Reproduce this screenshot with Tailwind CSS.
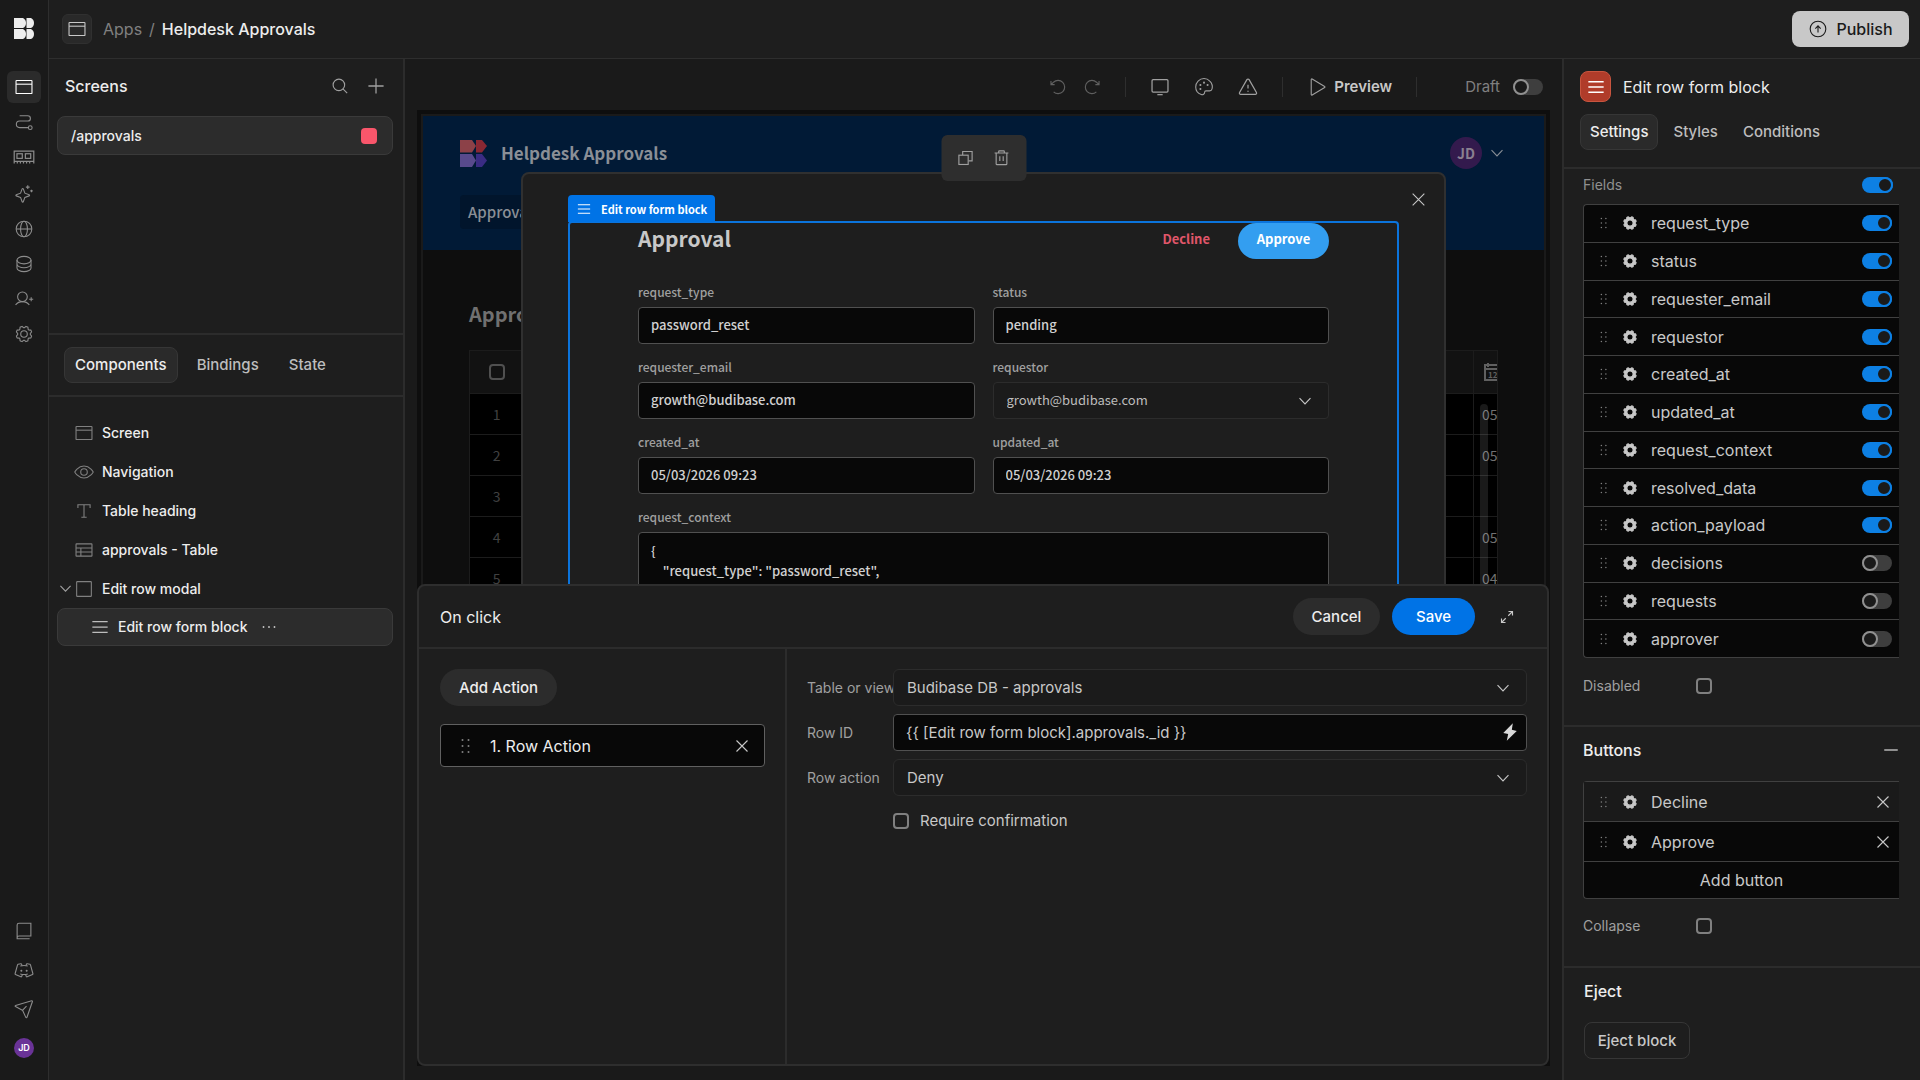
<!DOCTYPE html>
<html lang="en">
<head>
  <meta charset="UTF-8">
  <meta name="viewport" content="width=device-width, initial-scale=1.0">
  <title>Helpdesk Approvals | Budibase</title>
  <script src="https://cdn.jsdelivr.net/npm/@tailwindcss/browser@4"></script>
</head>
<body class="h-screen flex overflow-hidden bg-[#1e1e1e] text-[#ededed] font-['Inter',sans-serif] text-[15px] leading-5">
  <!-- Icon set -->
  <svg class="hidden" xmlns="http://www.w3.org/2000/svg">
    <defs>
      <symbol id="i-browser" viewBox="0 0 256 256"><rect x="26" y="44" width="204" height="168" rx="8"/><path d="M26 92H230"/></symbol>
      <symbol id="i-path" viewBox="0 0 256 256"><circle cx="208" cy="200" r="24"/><path d="M72 48h104a34 34 0 0 1 0 68H72a42 42 0 0 0 0 84H184"/></symbol>
      <symbol id="i-card" viewBox="0 0 256 256"><path d="M14 204V60h228v144M14 180h228M50 182v22M86 182v22M122 182v22M158 182v22M194 182v22"/><rect x="46" y="90" width="62" height="54"/><rect x="144" y="90" width="62" height="54"/></symbol>
      <symbol id="i-sparkle" viewBox="0 0 256 256"><path d="M84 172l-55-20a8 8 0 0 1 0-15l55-20 20-55a8 8 0 0 1 15 0l20 55 55 20a8 8 0 0 1 0 15l-55 20-20 55a8 8 0 0 1-15 0ZM176 16v48M200 40h-48M224 72v32M240 88h-32"/></symbol>
      <symbol id="i-globe" viewBox="0 0 256 256"><circle cx="128" cy="128" r="100"/><path d="M28 128H228"/><ellipse cx="128" cy="128" rx="44" ry="100"/></symbol>
      <symbol id="i-database" viewBox="0 0 256 256"><ellipse cx="128" cy="78" rx="90" ry="48"/><path d="M38 78v50c0 26 40 48 90 48s90-22 90-48V78M38 128v50c0 26 40 48 90 48s90-22 90-48v-50"/></symbol>
      <symbol id="i-user-plus" viewBox="0 0 256 256"><circle cx="108" cy="100" r="62"/><path d="M20 204c20-25 50-42 88-42s68 17 88 42M220 106v52M194 132h52"/></symbol>
      <symbol id="i-gear" viewBox="0 0 256 256"><path d="M41 178A99 99 0 0 1 31 154l17-21a82 82 0 0 1 0-10l-17-21a99 99 0 0 1 10-24l27-3a81 81 0 0 1 7-7l3-27A99 99 0 0 1 102 31l21 17a82 82 0 0 1 10 0l21-17a99 99 0 0 1 24 10l3 27a81 81 0 0 1 7 7l27 3a99 99 0 0 1 10 24l-17 21a82 82 0 0 1 0 10l17 21a99 99 0 0 1-10 24l-27 3a81 81 0 0 1-7 7l-3 27a99 99 0 0 1-24 10l-21-17a82 82 0 0 1-10 0l-21 17a99 99 0 0 1-24-10l-3-27a81 81 0 0 1-7-7Z"/><circle cx="128" cy="128" r="42"/></symbol>
      <symbol id="i-gear-fill" viewBox="0 0 256 256"><path fill="currentColor" stroke="currentColor" stroke-width="20" stroke-linejoin="round" fill-rule="evenodd" d="M41 178A99 99 0 0 1 31 154l17-21a82 82 0 0 1 0-10l-17-21a99 99 0 0 1 10-24l27-3a81 81 0 0 1 7-7l3-27A99 99 0 0 1 102 31l21 17a82 82 0 0 1 10 0l21-17a99 99 0 0 1 24 10l3 27a81 81 0 0 1 7 7l27 3a99 99 0 0 1 10 24l-17 21a82 82 0 0 1 0 10l17 21a99 99 0 0 1-10 24l-27 3a81 81 0 0 1-7 7l-3 27a99 99 0 0 1-24 10l-21-17a82 82 0 0 1-10 0l-21 17a99 99 0 0 1-24-10l-3-27a81 81 0 0 1-7-7ZM128 78a50 50 0 1 0 0 100 50 50 0 1 0 0-100Z"/></symbol>
      <symbol id="i-book" viewBox="0 0 256 256"><path d="M40 216a24 24 0 0 1 24-24H216V28H64A24 24 0 0 0 40 52ZM40 216v12H200"/></symbol>
      <symbol id="i-discord" viewBox="0 0 256 256"><circle cx="94" cy="138" r="6" fill="currentColor"/><circle cx="162" cy="138" r="6" fill="currentColor"/><path d="M154 74l5-20a8 8 0 0 1 9-6l36 6a8 8 0 0 1 6 6l32 116a8 8 0 0 1-5 9l-69 30a8 8 0 0 1-11-5L147 183M102 74l-5-20a8 8 0 0 0-9-6L52 54a8 8 0 0 0-6 6L14 176a8 8 0 0 0 5 9l69 30a8 8 0 0 0 11-5l10-27M80 78a177 177 0 0 1 96 0M176 178a177 177 0 0 1-96 0"/></symbol>
      <symbol id="i-plane" viewBox="0 0 256 256"><path d="M236 32a8 8 0 0 0-10-9L20 82a8 8 0 0 0-1 15l88 46a8 8 0 0 1 4 4l40 88a8 8 0 0 0 15-1ZM108 146l52-54"/></symbol>
      <symbol id="i-search" viewBox="0 0 256 256"><circle cx="112" cy="112" r="82"/><path d="M170 170l60 60"/></symbol>
      <symbol id="i-plus" viewBox="0 0 256 256"><path d="M20 128H236M128 20V236"/></symbol>
      <symbol id="i-minus" viewBox="0 0 256 256"><path d="M20 128H236"/></symbol>
      <symbol id="i-x" viewBox="0 0 256 256"><path d="M40 40L216 216M216 40L40 216"/></symbol>
      <symbol id="i-eye" viewBox="0 0 256 256"><path d="M128 52C46 52 10 128 10 128s36 76 118 76 118-76 118-76S210 52 128 52Z"/><circle cx="128" cy="128" r="42"/></symbol>
      <symbol id="i-text" viewBox="0 0 256 256"><path d="M50 88V48H206V88M128 48V208M94 208h68"/></symbol>
      <symbol id="i-table" viewBox="0 0 256 256"><rect x="26" y="50" width="204" height="156" rx="6"/><path d="M26 102H230M26 154H230M88 102V206"/></symbol>
      <symbol id="i-square" viewBox="0 0 256 256"><rect x="34" y="34" width="188" height="188" rx="8"/></symbol>
      <symbol id="i-list" viewBox="0 0 256 256"><path d="M30 60H226M30 128H226M30 196H226"/></symbol>
      <symbol id="i-dots" viewBox="0 0 256 256"><g fill="currentColor" stroke="none"><circle cx="50" cy="128" r="13"/><circle cx="128" cy="128" r="13"/><circle cx="206" cy="128" r="13"/></g></symbol>
      <symbol id="i-chevron" viewBox="0 0 256 256"><path d="M28 76L128 180 228 76"/></symbol>
      <symbol id="i-undo" viewBox="0 0 256 256"><path d="M80 94H28V42M66 198a94 94 0 1 0-2-138L30 94"/></symbol>
      <symbol id="i-redo" viewBox="0 0 256 256"><path d="M176 94h52V42M190 198a94 94 0 1 1 2-138l34 34"/></symbol>
      <symbol id="i-monitor" viewBox="0 0 256 256"><rect x="26" y="34" width="204" height="158" rx="14"/><path d="M94 226h68"/></symbol>
      <symbol id="i-palette" viewBox="0 0 256 256"><path d="M202 52A105 105 0 0 0 128 20 106 106 0 0 0 22 128c0 44 28 82 71 97a32 32 0 0 0 43-30 17 17 0 0 1 17-17h47a32 32 0 0 0 31-25 105 105 0 0 0-29-101Z"/><g fill="currentColor" stroke="none"><circle cx="128" cy="72" r="13"/><circle cx="82" cy="102" r="13"/><circle cx="82" cy="154" r="13"/><circle cx="174" cy="102" r="13"/></g></symbol>
      <symbol id="i-warning" viewBox="0 0 256 256"><path d="M142 34L236 198a16 16 0 0 1-14 24H34a16 16 0 0 1-14-24L114 34a16 16 0 0 1 28 0ZM128 100v48"/><circle cx="128" cy="182" r="9" fill="currentColor" stroke="none"/></symbol>
      <symbol id="i-play" viewBox="0 0 256 256"><path d="M54 32V224a8 8 0 0 0 12 7L226 135a8 8 0 0 0 0-14L66 25a8 8 0 0 0-12 7Z"/></symbol>
      <symbol id="i-copy" viewBox="0 0 256 256"><path d="M88 84V36H222V168H170"/><rect x="34" y="88" width="132" height="132"/></symbol>
      <symbol id="i-trash" viewBox="0 0 256 256"><path d="M30 56H226M52 56V214a8 8 0 0 0 8 8H196a8 8 0 0 0 8-8V56M104 104v68M152 104v68M88 54V34a8 8 0 0 1 8-8h64a8 8 0 0 1 8 8V54"/></symbol>
      <symbol id="i-expand" viewBox="0 0 256 256"><path d="M152 40h64v64M216 40l-68 68M104 216H40v-64M40 216l68-68"/></symbol>
      <symbol id="i-bolt" viewBox="0 0 256 256"><path fill="currentColor" stroke="none" d="M168 4L32 142l70 16-20 94L224 112l-70-16Z"/></symbol>
      <symbol id="i-grip" viewBox="0 0 10 16"><g fill="currentColor" stroke="none"><circle cx="1.5" cy="2" r="1"/><circle cx="7.5" cy="2" r="1"/><circle cx="1.5" cy="8" r="1"/><circle cx="7.5" cy="8" r="1"/><circle cx="1.5" cy="14" r="1"/><circle cx="7.5" cy="14" r="1"/></g></symbol>
      <symbol id="i-up" viewBox="0 0 256 256"><circle cx="128" cy="128" r="100"/><path d="M94 122l34-34 34 34M128 88v84"/></symbol>
    </defs>
  </svg>

  <!-- Icon rail -->
  <nav class="w-[49px] shrink-0 flex flex-col items-center border-r border-[#2e2e2e] bg-[#1a1a1a] text-[#8c8c8c]">
    <a href="/" aria-label="Budibase" class="mt-[18px] mb-8 text-[#ededed]">
      <svg class="w-5 h-[21px]" viewBox="0 0 20 21" fill="currentColor"><path d="M0 0h9q3 1.500 3 5t-3 5H0Z"/><path d="M12.500 0H17q3 1.500 3 5t-3 5h-4.500Z"/><path d="M0 11h9q3 1.500 3 5t-3 5H0Z"/><path d="M12.500 11H17q3 1.500 3 5t-3 5h-4.500Z"/></svg>
    </a>
    <div class="flex flex-col gap-[3px]">
      <a href="#design" aria-label="Design" class="w-[34px] h-8 grid place-items-center rounded-md bg-[#2b2b2b] text-white"><svg class="size-5 fill-none stroke-current stroke-[14]"><use href="#i-browser"/></svg></a>
      <a href="#automations" aria-label="Automations" class="w-[34px] h-8 grid place-items-center"><svg class="size-5 fill-none stroke-current stroke-[14]"><use href="#i-path"/></svg></a>
      <a href="#workspace" aria-label="Workspace" class="w-[34px] h-8 grid place-items-center"><svg class="size-[22px] fill-none stroke-current stroke-[14]"><use href="#i-card"/></svg></a>
    </div>
    <div class="mt-[5px] flex flex-col gap-[3px]">
      <a href="#ai" aria-label="AI" class="w-[34px] h-8 grid place-items-center"><svg class="size-5 fill-none stroke-current stroke-[14]"><use href="#i-sparkle"/></svg></a>
      <a href="#apis" aria-label="APIs" class="w-[34px] h-8 grid place-items-center"><svg class="size-5 fill-none stroke-current stroke-[14]"><use href="#i-globe"/></svg></a>
      <a href="#data" aria-label="Data" class="w-[34px] h-8 grid place-items-center"><svg class="size-5 fill-none stroke-current stroke-[14]"><use href="#i-database"/></svg></a>
      <a href="#users" aria-label="Users" class="w-[34px] h-8 grid place-items-center"><svg class="size-5 fill-none stroke-current stroke-[14]"><use href="#i-user-plus"/></svg></a>
      <a href="#settings" aria-label="Settings" class="w-[34px] h-8 grid place-items-center"><svg class="size-5 fill-none stroke-current stroke-[14]"><use href="#i-gear"/></svg></a>
    </div>
    <div class="mt-auto mb-4 flex flex-col gap-[7px]">
      <a href="#docs" aria-label="Docs" class="w-[34px] h-8 grid place-items-center"><svg class="size-5 fill-none stroke-current stroke-[14]"><use href="#i-book"/></svg></a>
      <a href="#discord" aria-label="Discord" class="w-[34px] h-8 grid place-items-center"><svg class="size-5 fill-none stroke-current stroke-[14]"><use href="#i-discord"/></svg></a>
      <a href="#feedback" aria-label="Feedback" class="w-[34px] h-8 grid place-items-center"><svg class="size-5 fill-none stroke-current stroke-[14]"><use href="#i-plane"/></svg></a>
      <button class="w-[34px] h-8 grid place-items-center"><span class="size-5 grid place-items-center rounded-full bg-[#6a3397] text-white text-[9px] font-semibold">JD</span></button>
    </div>
  </nav>

  <div class="flex-1 min-w-0 flex flex-col">
    <!-- Top bar -->
    <header class="h-[59px] shrink-0 flex items-center border-b border-[#2e2e2e] pl-[13px] pr-[11px]">
      <button aria-label="App" class="size-[30px] grid place-items-center rounded-md border border-[#303030] bg-[#292929] text-[#c8c8c8]"><svg class="size-5 fill-none stroke-current stroke-[14]"><use href="#i-browser"/></svg></button>
      <div class="ml-[11px] flex gap-[7px] text-base">
        <a href="/apps" class="text-[#808080]">Apps</a>
        <span class="text-[#808080]">/</span>
        <span class="font-medium">Helpdesk Approvals</span>
      </div>
      <button class="ml-auto h-9 w-[117px] flex items-center justify-center gap-2 rounded-lg bg-[#c8c8c8] text-[#1a1a1a] text-base font-medium"><svg class="size-5 fill-none stroke-current stroke-[14]"><use href="#i-up"/></svg>Publish</button>
    </header>

    <div class="flex-1 min-h-0 flex">
      <!-- Left panel -->
      <aside class="w-[356px] shrink-0 border-r-2 border-[#2c2c2c]">
        <section class="h-[276px] border-b-2 border-[#2c2c2c]">
          <div class="mb-1 h-[53px] flex items-center px-4 text-[#a0a0a0]">
            <h2 class="mr-auto text-base font-medium text-[#ededed]">Screens</h2>
            <button aria-label="Search" class="mr-[18px]"><svg class="size-[18px] fill-none stroke-current stroke-[16]"><use href="#i-search"/></svg></button>
            <button aria-label="Add screen" class="mr-[2px]"><svg class="size-[18px] fill-none stroke-current stroke-[18]"><use href="#i-plus"/></svg></button>
          </div>
          <a href="#approvals" class="ml-2 mr-[10px] h-[39px] flex items-center justify-between rounded-lg border border-[#3a3a3a] bg-[#2c2c2c] pl-[13px] pr-[15px] text-sm font-medium">/approvals <span class="size-4 rounded bg-[#f9566b]"></span></a>
        </section>
        <div class="h-[62px] flex items-center gap-2 border-b-2 border-[#2c2c2c] pl-[15px] text-[15px] font-medium text-[#bdbdbd]">
          <button class="h-9 rounded-lg border border-[#363636] bg-[#2a2a2a] px-[10px] text-[#ededed]">Components</button>
          <button class="h-9 px-[11px]">Bindings</button>
          <button class="h-9 px-[11px]">State</button>
        </div>
        <ul class="pt-4 pl-2 pr-[10px] text-sm font-medium">
          <li><a href="#screen" class="h-[39px] flex items-center gap-2 pl-[17px]"><svg class="size-5 fill-none stroke-[#808080] stroke-[14]"><use href="#i-browser"/></svg>Screen</a></li>
          <li><a href="#navigation" class="h-[39px] flex items-center gap-2 pl-[17px]"><svg class="size-5 fill-none stroke-[#808080] stroke-[14]"><use href="#i-eye"/></svg>Navigation</a></li>
          <li><a href="#heading" class="h-[39px] flex items-center gap-2 pl-[17px]"><svg class="size-5 fill-none stroke-[#808080] stroke-[14]"><use href="#i-text"/></svg>Table heading</a></li>
          <li><a href="#table" class="h-[39px] flex items-center gap-2 pl-[17px]"><svg class="size-5 fill-none stroke-[#808080] stroke-[14]"><use href="#i-table"/></svg>approvals - Table</a></li>
          <li><a href="#modal" class="h-[39px] flex items-center gap-2 pl-[2px]"><svg class="-mr-[6px] size-[13px] fill-none stroke-[#a0a0a0] stroke-[22]"><use href="#i-chevron"/></svg><svg class="size-5 fill-none stroke-[#808080] stroke-[14]"><use href="#i-square"/></svg>Edit row modal</a></li>
          <li><a href="#form" class="h-[38px] flex items-center gap-2 rounded-lg border border-[#3a3a3a] bg-[#2c2c2c] pl-8"><svg class="size-5 fill-none stroke-[#bdbdbd] stroke-[16]"><use href="#i-list"/></svg>Edit row form block<svg class="ml-1 size-[18px] text-[#c8c8c8]"><use href="#i-dots"/></svg></a></li>
        </ul>
      </aside>

      <!-- Canvas -->
      <main class="flex-1 min-w-0 flex flex-col bg-[#1a1a1a] px-3 pb-[14px]">
        <div class="h-[51px] shrink-0 flex items-center justify-end pt-1 pr-[7px] text-[#a0a0a0]">
          <button aria-label="Undo" class="mr-4 text-[#606060]"><svg class="size-[18px] fill-none stroke-current stroke-[16]"><use href="#i-undo"/></svg></button>
          <button aria-label="Redo" class="mr-6 text-[#606060]"><svg class="size-[18px] fill-none stroke-current stroke-[16]"><use href="#i-redo"/></svg></button>
          <span class="mr-6 h-5 w-px bg-[#2e2e2e]"></span>
          <button aria-label="Desktop" class="mr-6"><svg class="size-5 fill-none stroke-current stroke-[16]"><use href="#i-monitor"/></svg></button>
          <button aria-label="Theme" class="mr-6"><svg class="size-5 fill-none stroke-current stroke-[14]"><use href="#i-palette"/></svg></button>
          <button aria-label="Issues" class="mr-6"><svg class="size-5 fill-none stroke-current stroke-[16]"><use href="#i-warning"/></svg></button>
          <span class="mr-6 h-5 w-px bg-[#2e2e2e]"></span>
          <button class="mr-6 flex items-center gap-[7px] text-[15px] font-semibold text-[#c8c8c8]"><svg class="size-5 fill-none stroke-[#a0a0a0] stroke-[14]"><use href="#i-play"/></svg>Preview</button>
          <span class="mr-12 h-5 w-px bg-[#2e2e2e]"></span>
          <label class="flex items-center gap-[13px] text-[15px] text-[#808080]">Draft
            <input type="checkbox" class="appearance-none h-4 w-[30px] rounded-full bg-[#3e3e3e] before:block before:size-4 before:rounded-full before:border-2 before:border-[#909090] before:bg-[#1a1a1a]">
          </label>
        </div>

        <div class="relative flex-1 min-h-0">
          <div class="relative h-full overflow-hidden border-4 border-[#0e0e0e] bg-[#1a1a1a] p-[2px] font-['Noto_Sans_CJK_SC',sans-serif]">
            <!-- App page -->
            <div class="h-full bg-[#0e0e0e] text-[#767676]">
              <div class="h-[134px] bg-[#011a36] pl-[37px] pr-[40px] pt-[21px]">
                <div class="h-8 flex items-center">
                  <svg class="size-[27px]" viewBox="0 0 27 27"><path fill="#8c4148" d="M0 0h12l4 6-4 6.500H0Z"/><path fill="#8a2833" d="M16 0h6l5 6-5 6.500h-6Z"/><path fill="#584a8c" d="M0 14h12l4 6.500-4 6.500H0Z"/><path fill="#3a2c83" d="M16 14h6l5 6.500-5 6.500h-6Z"/></svg>
                  <h1 class="ml-[14px] mr-auto text-[17px] font-bold text-[#8a8f96]">Helpdesk Approvals</h1>
                  <button class="flex items-center gap-2"><span class="size-8 grid place-items-center rounded-full bg-[#331a4d] text-sm font-bold text-[#8a8090]">JD</span><svg class="size-[14px] fill-none stroke-[#8a8f96] stroke-[20]"><use href="#i-chevron"/></svg></button>
                </div>
                <a href="#approvals" class="mt-[26px] inline-block h-[34px] rounded bg-[#01152c] px-2 text-[15px] leading-[34px] font-medium text-[#8a8f96]">Approvals</a>
              </div>
              <div class="px-[46px] pt-12">
                <h2 class="text-xl leading-8 font-bold text-[#707070]">Approvals</h2>
                <table class="mt-5 w-full table-fixed border border-[#1c1c1c] bg-black text-sm text-[#707070]">
                  <thead>
                    <tr class="h-[43px] bg-[#121212]">
                      <th class="w-[54px] align-middle"><input type="checkbox" aria-label="Select all" class="block mx-auto appearance-none size-4 rounded-sm border-2 border-[#505050]"></th>
                      <th></th>
                      <th class="w-6 overflow-hidden border-l border-[#1c1c1c]"><svg class="ml-[10px] size-[18px] max-w-none fill-none stroke-[#606060] stroke-2" viewBox="0 0 18 18"><path d="M1 2h16v15H1ZM1 6h16M4 0v4M14 0v4"/><text x="4" y="15" class="fill-[#606060] stroke-none text-[8px] font-bold">12</text></svg></th>
                    </tr>
                  </thead>
                  <tbody>
                    <tr class="h-[41px] border-t border-[#1c1c1c]"><td class="text-center text-[#404040]">1</td><td></td><td class="overflow-hidden border-l border-[#1c1c1c] pl-2">05</td></tr>
                    <tr class="h-[41px] border-t border-[#1c1c1c]"><td class="text-center text-[#404040]">2</td><td></td><td class="overflow-hidden border-l border-[#1c1c1c] pl-2">05</td></tr>
                    <tr class="h-[41px] border-t border-[#1c1c1c]"><td class="text-center text-[#404040]">3</td><td></td><td class="border-l border-[#1c1c1c]"></td></tr>
                    <tr class="h-[41px] border-t border-[#1c1c1c]"><td class="text-center text-[#404040]">4</td><td></td><td class="overflow-hidden border-l border-[#1c1c1c] pl-2">05</td></tr>
                    <tr class="h-[41px] border-t border-[#1c1c1c]"><td class="text-center text-[#404040]">5</td><td></td><td class="overflow-hidden border-l border-[#1c1c1c] pl-2">04</td></tr>
                  </tbody>
                </table>
              </div>
            </div>
            <div class="absolute right-[58px] top-[290px] h-[300px] w-2 rounded-full bg-white/10"></div>

            <!-- Edit row modal -->
            <div class="absolute inset-x-[100px] top-[58px] h-[600px] rounded-lg border-2 border-[#303030] bg-[#1e1e1e] px-[45px] pt-[47px]">
              <button aria-label="Close" class="absolute right-[17px] top-[17px]"><svg class="size-[17px] fill-none stroke-[#c8c8c8] stroke-[16]"><use href="#i-x"/></svg></button>
              <div class="relative h-full rounded-sm border-2 border-[#0b74dc] px-[68px]">
                <span class="absolute -left-[2px] -top-[28px] h-[27px] flex items-center gap-[9px] rounded-t bg-[#0073e6] px-2 text-[11px] font-bold text-white"><svg class="size-4 fill-none stroke-current stroke-[16]"><use href="#i-list"/></svg>Edit row form block</span>
                <div class="flex items-start">
                  <h2 class="mr-auto text-[21px] leading-[30px] font-bold text-[#c8c8c8]">Approval</h2>
                  <button class="mr-7 h-8 text-[13px] font-bold text-[#e0566a]">Decline</button>
                  <button class="h-9 w-[91px] rounded-full bg-[#339ef0] pb-1 text-[13px] font-bold text-white">Approve</button>
                </div>
                <form class="mt-[18px] grid grid-cols-2 gap-x-[18px] gap-y-2 text-[13px] font-medium text-[#d0d0d0]">
                  <div><label for="type" class="block h-[30px] text-xs leading-[29px] text-[#a0a0a0]">request_type</label><input id="type" value="password_reset" class="block h-[37px] w-full rounded border border-[#505050] bg-[#080808] px-3 pb-[2px]"></div>
                  <div><label for="status" class="block h-[30px] text-xs leading-[29px] text-[#a0a0a0]">status</label><input id="status" value="pending" class="block h-[37px] w-full rounded border border-[#505050] bg-[#080808] px-3 pb-[2px]"></div>
                  <div><label for="email" class="block h-[30px] text-xs leading-[29px] text-[#a0a0a0]">requester_email</label><input id="email" value="growth@budibase.com" class="block h-[37px] w-full rounded border border-[#505050] bg-[#080808] px-3 pb-[2px]"></div>
                  <div><label for="requestor" class="block h-[30px] text-xs leading-[29px] text-[#a0a0a0]">requestor</label>
                    <div class="relative"><select id="requestor" class="block appearance-none h-[37px] w-full rounded border border-[#2c2c2c] bg-[#1b1b1b] px-[13px] pb-[2px] font-normal text-[#bdbdbd]"><option>growth@budibase.com</option></select><svg class="pointer-events-none absolute right-[17px] top-3 size-[14px] fill-none stroke-[#c8c8c8] stroke-[20]"><use href="#i-chevron"/></svg></div></div>
                  <div><label for="created" class="block h-[30px] text-xs leading-[29px] text-[#a0a0a0]">created_at</label><input id="created" value="05/03/2026 09:23" class="block h-[37px] w-full rounded border border-[#505050] bg-[#080808] px-3 pb-[2px]"></div>
                  <div><label for="updated" class="block h-[30px] text-xs leading-[29px] text-[#a0a0a0]">updated_at</label><input id="updated" value="05/03/2026 09:23" class="block h-[37px] w-full rounded border border-[#505050] bg-[#080808] px-3 pb-[2px]"></div>
                  <div class="col-span-2"><label for="context" class="block h-[30px] text-xs leading-[29px] text-[#a0a0a0]">request_context</label>
<textarea id="context" class="block h-40 w-full resize-none rounded border border-[#505050] bg-[#080808] px-3 py-2 leading-5">
{
    "request_type": "password_reset",
}</textarea></div>
                </form>
              </div>
            </div>

            <!-- Component actions -->
            <div class="absolute left-1/2 top-[21px] h-[46px] w-[85px] -translate-x-1/2 flex items-center justify-center gap-[18px] rounded-md bg-[#2e2e2e] text-[#a0a0a0]">
              <button aria-label="Duplicate"><svg class="size-[18px] fill-none stroke-current stroke-[16]"><use href="#i-copy"/></svg></button>
              <button aria-label="Delete"><svg class="size-[18px] fill-none stroke-current stroke-[16]"><use href="#i-trash"/></svg></button>
            </div>
          </div>

          <!-- On click drawer -->
          <div class="absolute left-0 right-px bottom-0 h-[482px] flex flex-col rounded-lg border-2 border-[#2e2e2e] bg-[#1e1e1e]">
            <div class="h-[63px] shrink-0 flex items-center border-b-2 border-[#2c2c2c] pl-[21px] pr-8 text-[15px]">
              <h2 class="mr-auto text-base">On click</h2>
              <button class="mr-3 h-[37px] w-[87px] rounded-full bg-[#2c2c2c] font-medium">Cancel</button>
              <button class="mr-6 h-[37px] w-[83px] rounded-full bg-[#0073e6] font-medium text-white">Save</button>
              <button aria-label="Expand"><svg class="size-4 fill-none stroke-[#c8c8c8] stroke-[18]"><use href="#i-expand"/></svg></button>
            </div>
            <div class="flex-1 flex">
              <div class="w-[368px] shrink-0 border-r-2 border-[#2c2c2c] pl-[21px] pr-5 pt-5">
                <button class="h-[37px] w-[117px] rounded-full bg-[#2c2c2c] text-[15px] font-medium">Add Action</button>
                <div class="mt-[18px] h-[43px] flex items-center rounded border border-[#606060] bg-[#080808] pl-5 pr-[14px] text-base"><svg class="mr-[19px] h-4 w-[10px] text-[#808080]"><use href="#i-grip"/></svg>1. Row Action<button aria-label="Remove action" class="ml-auto"><svg class="size-4 fill-none stroke-[#c8c8c8] stroke-[18]"><use href="#i-x"/></svg></button></div>
              </div>
              <div class="flex-1 flex flex-col gap-2 px-5 pt-5 text-[15px] text-[#c8c8c8]">
                <div class="flex items-center"><label for="source" class="w-[86px] whitespace-nowrap text-sm text-[#a0a0a0]">Table or view</label>
                  <div class="relative flex-1"><select id="source" class="block appearance-none h-[37px] w-full rounded-md border border-[#2c2c2c] bg-[#1b1b1b] px-[13px]"><option>Budibase DB - approvals</option></select><svg class="pointer-events-none absolute right-[17px] top-3 size-[14px] fill-none stroke-[#c8c8c8] stroke-[20]"><use href="#i-chevron"/></svg></div></div>
                <div class="flex items-center"><label for="row" class="w-[86px] whitespace-nowrap text-sm text-[#a0a0a0]">Row ID</label>
                  <div class="relative flex-1"><input id="row" value="{{ [Edit row form block].approvals._id }}" class="block h-[37px] w-full rounded border border-[#505050] bg-[#080808] px-3"><svg class="absolute right-2 top-[9px] size-[18px] text-[#d8d8d8]"><use href="#i-bolt"/></svg></div></div>
                <div class="flex items-center"><label for="action" class="w-[86px] whitespace-nowrap text-sm text-[#a0a0a0]">Row action</label>
                  <div class="relative flex-1"><select id="action" class="block appearance-none h-[37px] w-full rounded-md border border-[#2c2c2c] bg-[#1b1b1b] px-[13px]"><option>Deny</option></select><svg class="pointer-events-none absolute right-[17px] top-3 size-[14px] fill-none stroke-[#c8c8c8] stroke-[20]"><use href="#i-chevron"/></svg></div></div>
                <label class="mt-[7px] ml-[86px] flex items-center gap-[11px]"><input type="checkbox" class="appearance-none size-4 rounded-sm border-2 border-[#808080]">Require confirmation</label>
              </div>
            </div>
          </div>
        </div>
      </main>

      <!-- Settings panel -->
      <aside class="w-[358px] shrink-0 border-l-2 border-[#2c2c2c] text-[#c8c8c8]">
        <div class="h-[110px] border-b-2 border-[#2c2c2c] pl-4 pt-3">
          <div class="flex items-center gap-3 text-base text-[#ededed]"><span class="size-[31px] grid place-items-center rounded-lg border border-[#c8553f] bg-[#b03c2a] text-white"><svg class="size-5 fill-none stroke-current stroke-[18]"><use href="#i-list"/></svg></span>Edit row form block</div>
          <div class="mt-3 flex gap-[5px] text-[15px] font-medium text-[#bdbdbd]">
            <button class="h-9 rounded-lg border border-[#363636] bg-[#2a2a2a] px-[9px] text-[#ededed]">Settings</button>
            <button class="h-9 px-[10px]">Styles</button>
            <button class="h-9 px-[10px]">Conditions</button>
          </div>
        </div>
        <section class="h-[558px] border-b-2 border-[#2c2c2c] pl-[19px] pr-[21px]">
          <label class="mb-[3px] h-8 flex items-center justify-between pr-[6px] text-sm text-[#909090]">Fields
            <input type="checkbox" checked class="appearance-none h-4 w-[31px] rounded-full bg-[#0d80e4] before:ml-auto before:block before:size-4 before:rounded-full before:border-2 before:border-[#0d80e4] before:bg-[#1a1a1a]">
          </label>
          <ul id="fields" class="h-[454px] flex flex-col rounded-l border border-r-0 border-[#404040] bg-[#080808] divide-y divide-[#404040] text-base"></ul>
          <label class="mt-[18px] flex h-5 items-center text-sm text-[#a0a0a0]"><span class="w-[113px]">Disabled</span><input type="checkbox" class="appearance-none size-4 rounded-sm border-2 border-[#808080]"></label>
        </section>
        <section class="h-[241px] border-b-2 border-[#2c2c2c] pl-[19px] pr-[21px]">
          <div class="h-[46px] flex items-center justify-between"><h3 class="text-base font-medium text-[#ededed]">Buttons</h3><button aria-label="Collapse section"><svg class="size-4 fill-none stroke-[#a0a0a0] stroke-[28]"><use href="#i-minus"/></svg></button></div>
          <ul class="mt-2 rounded-l border border-r-0 border-[#404040] bg-[#080808] divide-y divide-[#404040] text-base">
            <li class="h-10 flex items-center bg-[#1a1a1a] pl-4 pr-2"><svg class="mr-[14px] h-3 w-2 text-[#808080]"><use href="#i-grip"/></svg><svg class="mr-[13px] size-4 text-[#c8c8c8]"><use href="#i-gear-fill"/></svg>Decline<button aria-label="Remove Decline" class="ml-auto"><svg class="size-4 fill-none stroke-current stroke-[18]"><use href="#i-x"/></svg></button></li>
            <li class="h-10 flex items-center pl-4 pr-2"><svg class="mr-[14px] h-3 w-2 text-[#808080]"><use href="#i-grip"/></svg><svg class="mr-[13px] size-4 text-[#c8c8c8]"><use href="#i-gear-fill"/></svg>Approve<button aria-label="Remove Approve" class="ml-auto"><svg class="size-4 fill-none stroke-current stroke-[18]"><use href="#i-x"/></svg></button></li>
            <li><button class="h-9 w-full">Add button</button></li>
          </ul>
          <label class="mt-[17px] flex h-5 items-center text-sm text-[#a0a0a0]"><span class="w-[113px]">Collapse</span><input type="checkbox" class="appearance-none size-4 rounded-sm border-2 border-[#808080]"></label>
        </section>
        <section class="pl-5">
          <h3 class="h-[46px] flex items-center text-base font-medium text-[#ededed]">Eject</h3>
          <button class="mt-2 h-[37px] w-[106px] rounded-lg border border-[#363636] text-[15px] font-medium">Eject block</button>
        </section>
      </aside>
    </div>
  </div>

  <script>
    const fields = [
      ['request_type', true], ['status', true], ['requester_email', true], ['requestor', true],
      ['created_at', true], ['updated_at', true], ['request_context', true], ['resolved_data', true],
      ['action_payload', true], ['decisions', false], ['requests', false], ['approver', false],
    ];

    document.getElementById('fields').innerHTML = fields.map(([name, on]) => `
      <li class="flex-1 flex items-center pl-4 pr-[7px]">
        <svg class="mr-[14px] h-3 w-2 text-[#808080]"><use href="#i-grip"/></svg>
        <svg class="mr-[13px] size-4 text-[#c8c8c8]"><use href="#i-gear-fill"/></svg>
        <label for="field-${name}" class="mr-auto">${name}</label>
        <input type="checkbox" id="field-${name}" ${on ? 'checked' : ''} class="appearance-none h-4 w-[30px] rounded-full bg-[#3e3e3e] checked:bg-[#0d80e4] before:block before:size-4 before:rounded-full before:border-2 before:border-[#909090] before:bg-[#1a1a1a] checked:before:ml-auto checked:before:border-[#0d80e4]">
      </li>`).join('');
  </script>
</body>
</html>
